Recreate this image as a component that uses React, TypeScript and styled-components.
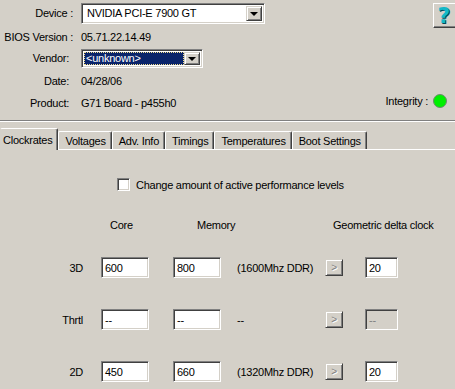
import React from "react";
import styled, { createGlobalStyle } from "styled-components";

const GlobalStyle = createGlobalStyle`
  html, body {
    margin: 0;
    padding: 0;
    background: #d4d0c8;
    overflow: hidden;
  }
  body {
    font-family: "Liberation Sans", Arial, sans-serif;
    font-size: 11px;
    letter-spacing: -0.25px;
    color: #000;
  }
`;

const Window = styled.div`
  width: 455px;
  height: 389px;
  overflow: hidden;
  background: #d4d0c8;
`;

const Header = styled.div`
  display: flex;
  height: 112px;
`;

const Form = styled.div`
  flex: 1;
  display: flex;
  flex-direction: column;
`;

const Field = styled.div<{ $h: number }>`
  display: flex;
  align-items: center;
  height: ${(p) => p.$h}px;
`;

const Label = styled.div<{ $pad: number }>`
  width: 81px;
  box-sizing: border-box;
  padding-right: ${(p) => p.$pad}px;
  text-align: right;
  white-space: nowrap;
`;

const Value = styled.div`
  white-space: nowrap;
`;

const Combo = styled.div<{ $w: number; $h: number }>`
  display: flex;
  align-items: center;
  width: ${(p) => p.$w}px;
  height: ${(p) => p.$h}px;
  box-sizing: border-box;
  background: #fff;
  border: 1px solid;
  border-color: #808080 #fff #fff #808080;
  box-shadow: inset 1px 1px #404040, inset -1px -1px #d4d0c8;
  padding: 2px;
`;

const ComboText = styled.div<{ $selected?: boolean }>`
  flex: 1;
  align-self: stretch;
  display: flex;
  align-items: center;
  padding-left: ${(p) => (p.$selected ? 1 : 2)}px;
  white-space: nowrap;
  background: ${(p) => (p.$selected ? "#0a246a" : "transparent")};
  color: ${(p) => (p.$selected ? "#fff" : "#000")};
  border: 1px ${(p) => (p.$selected ? "dotted #f0dc8c" : "solid transparent")};
  box-sizing: border-box;
`;

const DropButton = styled.div`
  width: 16px;
  align-self: stretch;
  box-sizing: border-box;
  background: #d4d0c8;
  border: 1px solid;
  border-color: #d4d0c8 #404040 #404040 #d4d0c8;
  box-shadow: inset 1px 1px #fff, inset -1px -1px #808080;
  display: flex;
  align-items: center;
  justify-content: center;
  &::after {
    content: "";
    border-left: 4px solid transparent;
    border-right: 4px solid transparent;
    border-top: 4px solid #000;
    margin-top: 1px;
  }
`;

const Side = styled.div`
  display: flex;
  flex-direction: column;
  align-items: flex-end;
  justify-content: space-between;
  padding: 3px 0 2px;
`;

const HelpButton = styled.div`
  width: 24px;
  height: 25px;
  margin-right: -2px;
  box-sizing: border-box;
  border-top: 1px solid #fff;
  border-left: 1px solid #fff;
  border-bottom: 1px solid #404040;
  box-shadow: inset 0 -1px #808080;
  display: flex;
  align-items: center;
  justify-content: center;
  font-family: "DejaVu Sans", sans-serif;
  font-weight: bold;
  font-size: 22px;
  letter-spacing: 0;
  color: #14b8c8;
  text-shadow: 1px 1px #004c5c;
  padding-right: 3px;
`;

const Integrity = styled.div`
  display: flex;
  align-items: center;
  gap: 5px;
  margin-right: 8px;
  height: 18px;
`;

const Led = styled.div`
  width: 14px;
  height: 14px;
  box-sizing: border-box;
  border-radius: 50%;
  background: #00f000;
  border: 1px solid #6e8a6e;
`;

const Separator = styled.div`
  margin-top: 8px;
  height: 0;
  border-top: 1px solid #808080;
  border-bottom: 1px solid #fff;
`;

const TabBar = styled.div`
  display: flex;
  align-items: flex-end;
  margin-top: 6px;
  height: 21px;
  border-bottom: 1px solid #fff;
`;

const Tab = styled.div<{ $active?: boolean }>`
  height: ${(p) => (p.$active ? 22 : 18)}px;
  margin-bottom: ${(p) => (p.$active ? -1 : 0)}px;
  padding: ${(p) => (p.$active ? "0 5px 0 2px" : "1px 5px 0 6px")};
  box-sizing: border-box;
  display: flex;
  align-items: center;
  background: #d4d0c8;
  border-top: 1px solid #fff;
  border-left: 1px solid ${(p) => (p.$active ? "transparent" : "#fff")};
  border-right: 1px solid #404040;
  border-radius: 2px 2px 0 0;
  box-shadow: inset -1px 0 #808080;
  white-space: nowrap;
  position: relative;
  z-index: ${(p) => (p.$active ? 1 : 0)};
`;

const Panel = styled.div`
  padding-top: 28px;
`;

const CheckRow = styled.label`
  display: flex;
  align-items: center;
  gap: 6px;
  padding-left: 117px;
  height: 13px;
`;

const CheckBox = styled.span`
  width: 13px;
  height: 13px;
  box-sizing: border-box;
  background: #fff;
  border: 1px solid;
  border-color: #808080 #fff #fff #808080;
  box-shadow: inset 1px 1px #404040, inset -1px -1px #d4d0c8;
`;

const Columns = "101px 72px 64px 88px 40px 40px";

const HeadRow = styled.div`
  display: grid;
  grid-template-columns: ${Columns};
  margin-top: 27px;
  height: 13px;
  align-items: center;
  white-space: nowrap;
`;

const Heading = styled.div<{ $col: number; $indent: number }>`
  grid-column: ${(p) => p.$col};
  padding-left: ${(p) => p.$indent}px;
`;

const ClockGrid = styled.div`
  display: grid;
  grid-template-columns: ${Columns};
  grid-auto-rows: 21px;
  row-gap: 31px;
  margin-top: 26px;
  align-items: center;
  white-space: nowrap;
`;

const RowLabel = styled.div`
  text-align: right;
  padding-right: 18px;
`;

const Edit = styled.div<{ $w: number; $disabled?: boolean }>`
  width: ${(p) => p.$w}px;
  height: 21px;
  box-sizing: border-box;
  background: ${(p) => (p.$disabled ? "#d4d0c8" : "#fff")};
  color: ${(p) => (p.$disabled ? "#808080" : "#000")};
  border: 1px solid;
  border-color: #808080 #fff #fff #808080;
  box-shadow: inset 1px 1px #404040, inset -1px -1px #d4d0c8;
  padding-left: 3px;
  display: flex;
  align-items: center;
`;

const Note = styled.div``;

const ArrowButton = styled.div`
  width: 18px;
  height: 17px;
  box-sizing: border-box;
  background: #d4d0c8;
  border: 1px solid;
  border-color: #d4d0c8 #404040 #404040 #d4d0c8;
  box-shadow: inset 1px 1px #fff, inset -1px -1px #808080;
  display: flex;
  align-items: center;
  justify-content: center;
  color: #808080;
  text-shadow: 1px 1px #fff;
  font-size: 10px;
`;

type ClockRow = {
  name: string;
  core: string;
  memory: string;
  note: string;
  delta: string;
  disabled?: boolean;
};

const rows: ClockRow[] = [
  { name: "3D", core: "600", memory: "800", note: "(1600Mhz DDR)", delta: "20" },
  { name: "Thrtl", core: "--", memory: "--", note: "--", delta: "--", disabled: true },
  { name: "2D", core: "450", memory: "660", note: "(1320Mhz DDR)", delta: "20" },
];

const tabs = ["Clockrates", "Voltages", "Adv. Info", "Timings", "Temperatures", "Boot Settings"];

export default function App() {
  return (
    <Window>
      <GlobalStyle />
      <Header>
        <Form>
          <Field $h={26}>
            <Label $pad={8}>Device :</Label>
            <Combo $w={184} $h={21}>
              <ComboText>NVIDIA PCI-E 7900 GT</ComboText>
              <DropButton />
            </Combo>
          </Field>
          <Field $h={22}>
            <Label $pad={8}>BIOS Version :</Label>
            <Value>05.71.22.14.49</Value>
          </Field>
          <Field $h={20}>
            <Label $pad={12}>Vendor:</Label>
            <Combo $w={122} $h={19}>
              <ComboText $selected>&lt;unknown&gt;</ComboText>
              <DropButton />
            </Combo>
          </Field>
          <Field $h={26}>
            <Label $pad={12}>Date:</Label>
            <Value>04/28/06</Value>
          </Field>
          <Field $h={18}>
            <Label $pad={12}>Product:</Label>
            <Value>G71 Board - p455h0</Value>
          </Field>
        </Form>
        <Side>
          <HelpButton>?</HelpButton>
          <Integrity>
            Integrity :
            <Led />
          </Integrity>
        </Side>
      </Header>
      <Separator />
      <TabBar>
        {tabs.map((t, i) => (
          <Tab key={t} $active={i === 0}>
            {t}
          </Tab>
        ))}
      </TabBar>
      <Panel>
        <CheckRow>
          <CheckBox />
          Change amount of active performance levels
        </CheckRow>
        <HeadRow>
          <Heading $col={2} $indent={9}>Core</Heading>
          <Heading $col={3} $indent={24}>Memory</Heading>
          <Heading $col={5} $indent={8}>Geometric delta clock</Heading>
        </HeadRow>
        <ClockGrid>
          {rows.map((r) => (
            <React.Fragment key={r.name}>
              <RowLabel>{r.name}</RowLabel>
              <Edit $w={48}>{r.core}</Edit>
              <Edit $w={48}>{r.memory}</Edit>
              <Note>{r.note}</Note>
              <ArrowButton>&gt;</ArrowButton>
              <Edit $w={33} $disabled={r.disabled}>
                {r.delta}
              </Edit>
            </React.Fragment>
          ))}
        </ClockGrid>
      </Panel>
    </Window>
  );
}
